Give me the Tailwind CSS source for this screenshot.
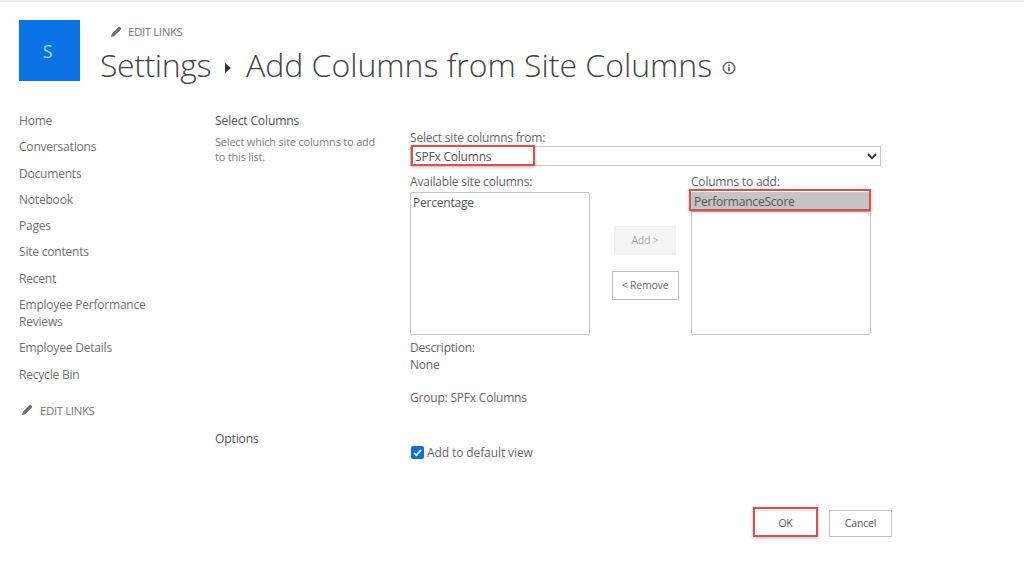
<!DOCTYPE html>
<html lang="en">
<head>
    <meta charset="UTF-8">
    <title>Add Columns from Site Columns</title>
    <script src="https://cdn.jsdelivr.net/npm/@tailwindcss/browser@4"></script>
</head>
<body class="bg-white">
<div class="w-[1024px] h-[564px] overflow-hidden font-['Open_Sans',sans-serif] text-[12px] tracking-[-0.2px] text-[#666]">
    <div class="h-[2px] bg-[#eeeeee]"></div>

    <!-- header -->
    <header class="flex pl-[19px] pt-[18px] h-[110px]">
        <div class="w-[61px] h-[61px] bg-[#0b72e6] flex items-center justify-center pr-[4px] pt-[1px] text-[#a9dcff] text-[18px]">S</div>
        <div class="ml-[20px]">
            <div class="flex items-center h-[24px] pl-[10px] text-[11.5px] text-[#777] tracking-[-0.4px]">
                <svg class="w-[12px] h-[12px] mr-[6px]" viewBox="0 0 12 12"><path d="M1 11l.7-3L8.6 1.1a.9.9 0 0 1 1.3 0l1 1a.9.9 0 0 1 0 1.3L4 10.3z" fill="#6e6e6e"/></svg>
                <span>EDIT LINKS</span>
            </div>
            <h1 class="flex items-center h-[42px] text-[32px] font-light text-[#444] tracking-[0px] whitespace-nowrap">
                <span class="tracking-[-0.4px]">Settings</span>
                <svg class="w-[6px] h-[10px] mx-[14.5px] mt-[5px]" viewBox="0 0 6 10"><path d="M0 0l6 5-6 5z" fill="#333"/></svg>
                <span>Add Columns from Site Columns</span>
                <svg class="w-[14px] h-[14px] ml-[10px] mt-[6px]" viewBox="0 0 14 14"><circle cx="7" cy="7" r="5.7" fill="none" stroke="#666" stroke-width="1.6"/><path d="M7 6v4.2M7 3.6v1.4" stroke="#666" stroke-width="1.8"/></svg>
            </h1>
        </div>
    </header>

    <div class="flex">
        <!-- left nav -->
        <nav class="w-[215px] pl-[19px] text-[12px] text-[#707070] leading-[17px]">
            <ul class="flex flex-col gap-[9.3px] w-[140px]">
                <li>Home</li>
                <li>Conversations</li>
                <li>Documents</li>
                <li>Notebook</li>
                <li>Pages</li>
                <li>Site contents</li>
                <li>Recent</li>
                <li>Employee Performance Reviews</li>
                <li>Employee Details</li>
                <li>Recycle Bin</li>
            </ul>
            <div class="flex items-center mt-[19px] pl-[2px] text-[11.5px] text-[#777] tracking-[-0.4px]">
                <svg class="w-[12px] h-[12px] mr-[7px]" viewBox="0 0 12 12"><path d="M1 11l.7-3L8.6 1.1a.9.9 0 0 1 1.3 0l1 1a.9.9 0 0 1 0 1.3L4 10.3z" fill="#6e6e6e"/></svg>
                <span>EDIT LINKS</span>
            </div>
        </nav>

        <!-- form -->
        <main class="flex-1">
            <div class="flex h-[318px]">
                <div class="w-[195px]">
                    <h2 class="text-[12.2px] text-[#555] leading-[17px]">Select Columns</h2>
                    <p class="mt-[5px] w-[170px] text-[11px] leading-[15px] text-[#808080]">Select which site columns to add to this list.</p>
                </div>
                <div class="w-[471px] pt-[17px] text-[12px] leading-[17px] relative">
                    <label class="block">Select site columns from:</label>
                    <div class="flex items-center justify-between h-[20px] border border-[#c8c8c8] pl-[4px] pr-[3px] text-[#555]">
                        <span>SPFx Columns</span>
                        <svg class="w-[10px] h-[7px]" viewBox="0 0 10 7"><path d="M1 1.2l4 4 4-4" fill="none" stroke="#333" stroke-width="1.8"/></svg>
                    </div>
                    <div class="flex mt-[7px]">
                        <div>
                            <label class="block">Available site columns:</label>
                            <div class="w-[180px] h-[143px] mt-[2px] border border-[#c8c8c8] rounded-[2px] px-[2px] pt-[1px] text-[#555]">Percentage</div>
                        </div>
                        <div class="w-[101px] flex flex-col items-center pl-[9px] pt-[53px]">
                            <button class="w-[62px] h-[29px] bg-[#f4f4f4] border border-[#f0f0f0] text-[10.5px] text-[#aaa]">Add &gt;</button>
                            <button class="w-[67px] h-[29px] mt-[16px] bg-white border border-[#bdbdbd] text-[10.5px] text-[#666]">&lt; Remove</button>
                        </div>
                        <div>
                            <label class="block">Columns to add:</label>
                            <div class="w-[180px] h-[143px] mt-[2px] border border-[#c8c8c8] rounded-[2px] text-[#555]">
                                <div class="h-[19px] bg-[#c4c4c4] px-[2px]">PerformanceScore</div>
                            </div>
                        </div>
                    </div>
                    <p class="mt-[4px]">Description:</p>
                    <p>None</p>
                    <p class="mt-[16px]">Group: SPFx Columns</p>

                    <!-- red annotation boxes -->
                    <div class="absolute left-[1px] top-[33px] w-[124px] h-[21px] border-[2px] border-[#d9504e] shadow-[0_1px_3px_rgba(0,0,0,0.3)]"></div>
                    <div class="absolute left-[279px] top-[77px] w-[182px] h-[22px] border-[2px] border-[#d9504e] shadow-[0_1px_3px_rgba(0,0,0,0.3)]"></div>
                </div>
            </div>
            <div class="flex">
                <h2 class="w-[195px] text-[12.2px] text-[#555] leading-[17px]">Options</h2>
                <label class="flex items-center gap-[3px] ml-[1px] mt-[14px] text-[12px] tracking-[-0.1px] leading-[17px]">
                    <svg class="w-[13px] h-[13px]" viewBox="0 0 13 13"><rect width="13" height="13" rx="2" fill="#0b6fe0"/><path d="M3 6.8l2.4 2.4L10 4" fill="none" stroke="#fff" stroke-width="1.8"/></svg>
                    <span>Add to default view</span>
                </label>
            </div>
            <div class="flex justify-end w-[677px] mt-[49px] gap-[12px]">
                <div class="relative">
                    <button class="block w-[63px] h-[27px] bg-white border border-[#e0e0e0] text-[10.5px] text-[#555]">OK</button>
                    <div class="absolute -left-[1px] -top-[3px] w-[65px] h-[30px] border-[2px] border-[#d9504e] shadow-[0_1px_3px_rgba(0,0,0,0.3)]"></div>
                </div>
                <button class="w-[63px] h-[27px] bg-white border border-[#c4c4c4] text-[10.5px] text-[#555]">Cancel</button>
            </div>
        </main>
    </div>
</div>
</body>
</html>
